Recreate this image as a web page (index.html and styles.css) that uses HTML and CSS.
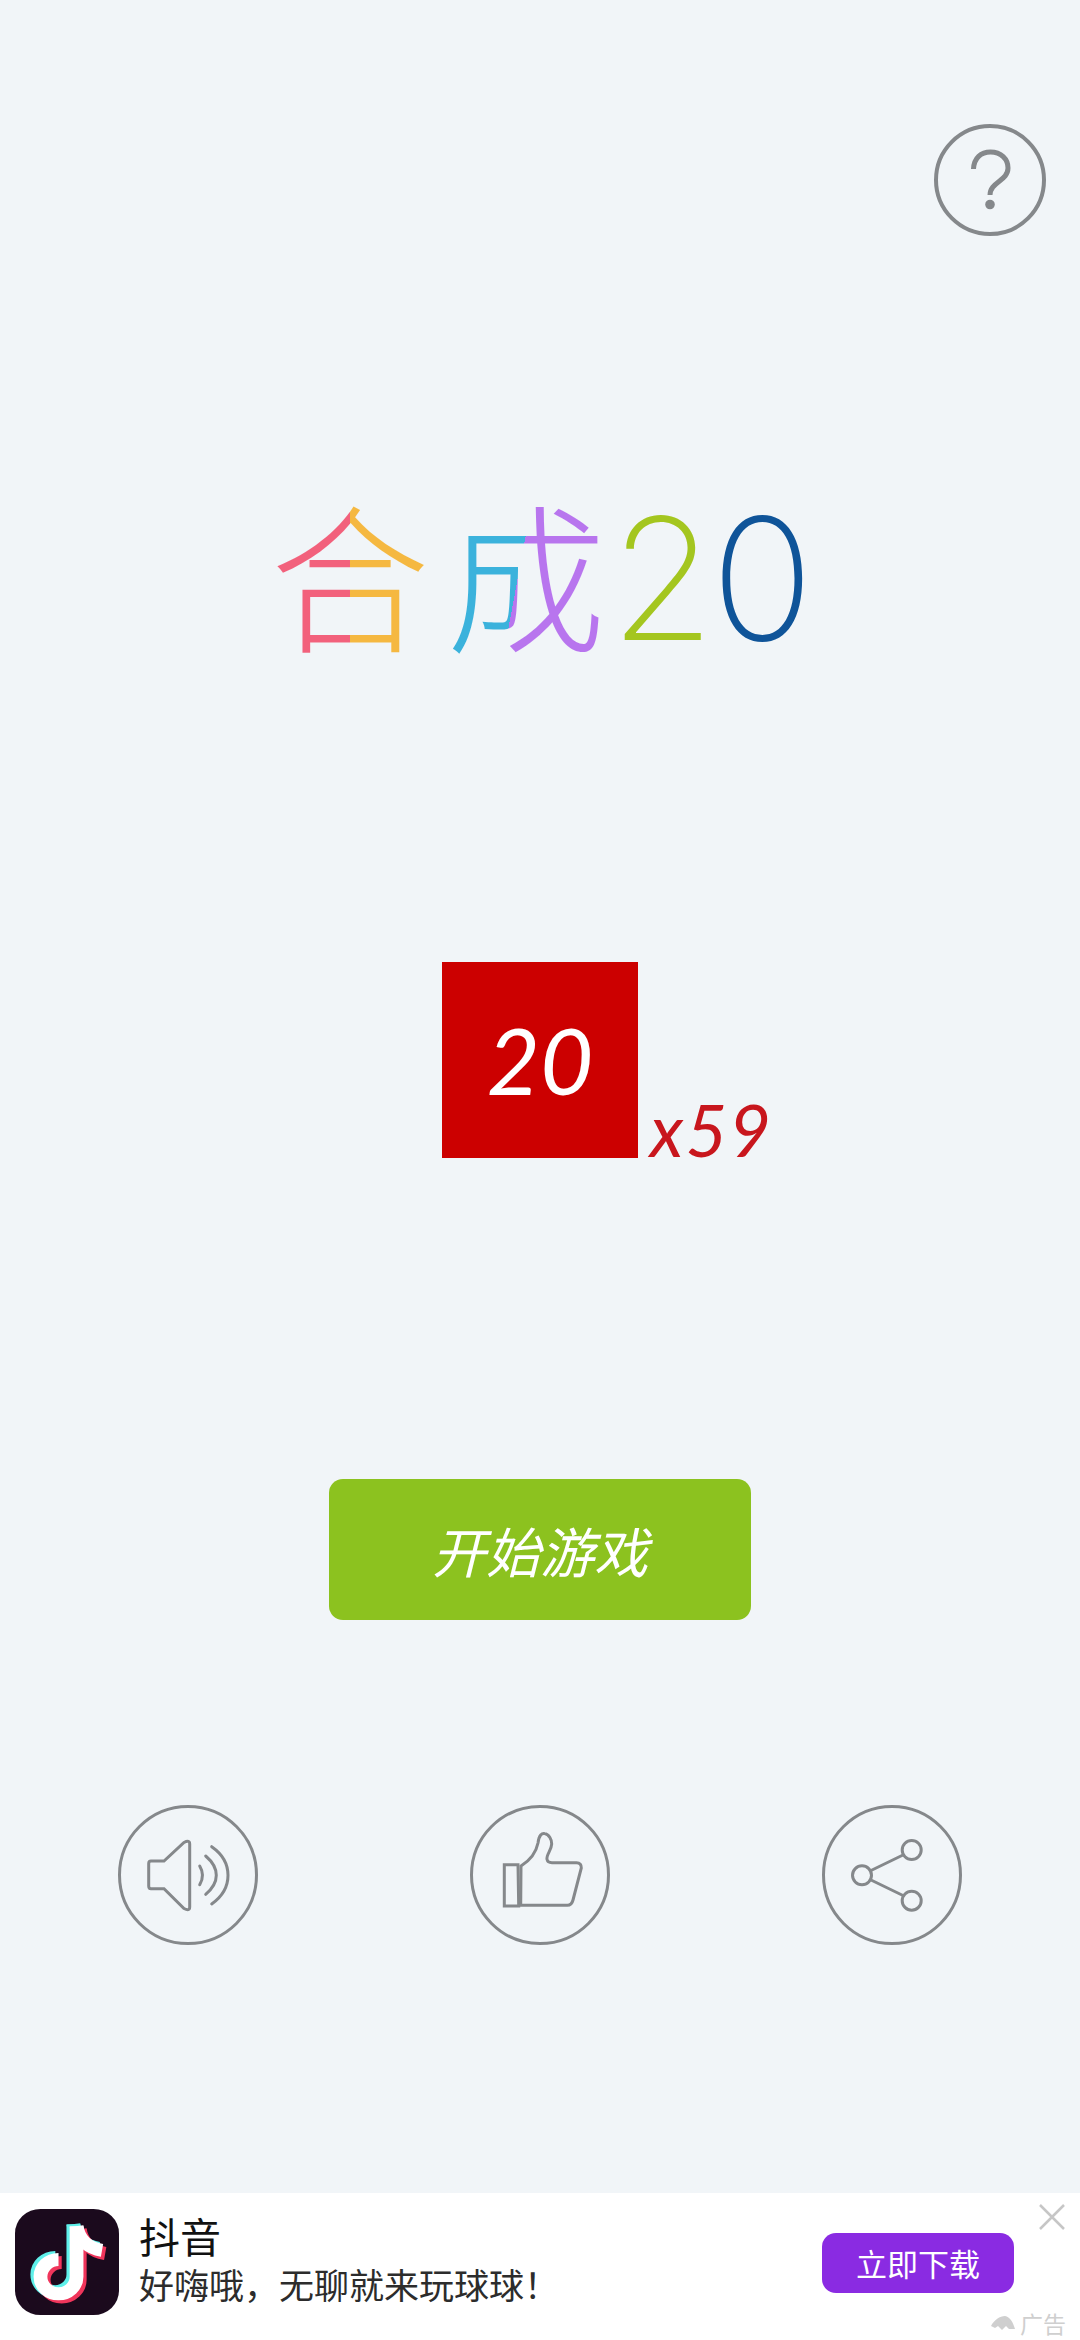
FILE: index.html
```html
<!DOCTYPE html>
<html lang="zh">
<head>
<meta charset="utf-8">
<title>合成20</title>
<link rel="stylesheet" href="styles.css">
</head>
<body>
<main class="page">
  <div class="top-bar">
    <button class="help">
      <svg class="help-svg" viewBox="0 0 112 112"><circle cx="56" cy="56" r="54" class="ln"/><path class="ln q" d="M39.5 45C40 34 47 28 56.5 28C67 28 74 35 74 44C74 57 56 58 56 71"/><circle cx="56" cy="80.5" r="4.8" class="dot"/></svg>
    </button>
  </div>
  <h1 class="title"><span class="ch he">合</span><span class="ch cheng">成</span><span class="num two">2</span><span class="num zero">0</span></h1>
  <div class="tile-row">
    <div class="tile">20<span class="count">x59</span></div>
  </div>
  <div class="start-row"><button class="start">开始游戏</button></div>
  <div class="actions">
    <svg class="act" viewBox="0 0 140 140"><circle cx="70" cy="70" r="68.5" class="ln thin"/><path class="ln thin" d="M33 56H46L66 37.500Q71.700 34.500 71.700 39V102Q71.700 106.500 66 103.500L46 83.700H33Q30.700 83.700 30.700 81V58.700Q30.700 56 33 56Z"/><path class="ln thin rd" d="M81.700 61Q87.300 70.300 81.700 79.700M87.700 51Q98.300 60 98.300 70.300Q98.300 80.500 87.700 89.300M93.700 41.700Q110 53 110 70.300Q110 87.500 93.700 99"/></svg>
    <svg class="act" viewBox="0 0 140 140"><circle cx="70" cy="70" r="68.500" class="ln thin"/><path class="ln thin" d="M34.300 59.700H48L48.700 101H34.300Z"/><path class="ln thin" d="M51 61C59 56 66 48 68 38C69 30 72 28 74.500 28.500C79 29 82 35 81.700 39C81.500 45 76 50 77 54.300C77.500 57 79 57.700 82 57.700H106.500C110 57.700 111.500 60 111.300 63L103 95C102 99 100.500 100.300 97.300 100.300H50.700Z"/></svg>
    <svg class="act" viewBox="0 0 140 140"><circle cx="70" cy="70" r="68.500" class="ln thin"/><circle cx="40" cy="70.300" r="9.500" class="ln thin"/><circle cx="89.700" cy="45" r="9.500" class="ln thin"/><circle cx="89.700" cy="95.700" r="9.500" class="ln thin"/><path class="ln thin" d="M49 65.500L81 50M49 75L81 90.500"/></svg>
  </div>
  <aside class="ad">
    <svg class="ad-icon" viewBox="0 0 98 105" preserveAspectRatio="none">
      <rect width="98" height="105" rx="24" fill="#1b0a1d"/>
      <g fill="none" stroke-width="13">
        <g stroke="#5ff0ea" transform="translate(-3 -2)"><path d="M58 17V67A17 17 0 1 1 41 50"/><path d="M58 17C60 31 70 39 82 41"/></g>
        <g stroke="#f0355b" transform="translate(3 3)"><path d="M58 17V67A17 17 0 1 1 41 50"/><path d="M58 17C60 31 70 39 82 41"/></g>
        <g stroke="#fff"><path d="M58 17V67A17 17 0 1 1 41 50"/><path d="M58 17C60 31 70 39 82 41"/></g>
      </g>
    </svg>
    <div class="ad-text">
      <div class="ad-name">抖音</div>
      <div class="ad-desc">好嗨哦，无聊就来玩球球！</div>
    </div>
    <button class="ad-btn">立即下载</button>
    <svg class="ad-close" viewBox="0 0 26 26"><path d="M1 1L25 25M25 1L1 25"/></svg>
    <div class="ad-tag">
      <svg class="ad-cloud" viewBox="0 0 24 14"><path d="M0 10C3 4 9 0 14 0C19 1 22 6 24 13H18L15 10L11 14L7 10L4 12Z"/></svg>广告
    </div>
  </aside>
</main>
</body>
</html>
```

FILE: styles.css
```css
* { box-sizing: border-box; }
html, body { margin: 0; padding: 0; }
body { background: #f1f5f8; }
button { border: 0; padding: 0; background: none; font: inherit; display: block; }

.page { width: 1080px; height: 2340px; display: flex; flex-direction: column; overflow: hidden; }

.top-bar { display: flex; justify-content: flex-end; padding: 124px 34px 0 0; }
.help, .help-svg { width: 112px; height: 112px; display: block; }

.ln { fill: none; stroke: #85888b; stroke-width: 4px; }
.thin { stroke-width: 3px; }
.rd { stroke-linecap: round; }
.q { stroke-width: 5px; }
.dot { fill: #85888b; }

.title {
  margin: 235px 0 0;
  padding-left: 270px;
  height: 200px;
  display: flex;
  align-items: center;
  font-weight: 300;
  line-height: 200px;
}
.ch {
  font-family: "Noto Sans CJK SC", sans-serif;
  font-size: 160px;
  font-weight: 300;
  color: transparent;
  -webkit-background-clip: text;
  background-clip: text;
  width: 160px;
}
.he { background-image: linear-gradient(90deg, #f2617c 0 50%, #f5b841 50%); margin-right: 16px; }
.cheng { background-image: linear-gradient(100.6deg, #3bb2dc 0 46.5%, #b875ee 46.5%); }
.num { font-family: "Inter", sans-serif; font-size: 170px; font-weight: 200; margin-top: 14px; }
.two { color: #a4c61f; margin-left: 4px; }
.zero { color: #0f5499; margin-left: -4px; }

.tile-row { margin-top: 291px; display: flex; justify-content: center; }
.tile {
  position: relative;
  width: 196px;
  height: 196px;
  background: #cc0000;
  color: #fff;
  font-family: "Lato", sans-serif;
  font-style: italic;
  font-weight: 400;
  font-size: 92px;
  line-height: 196px;
  text-align: center;
}
.count {
  position: absolute;
  left: 208px;
  bottom: -11px;
  color: #c8161d;
  font-size: 72px;
  font-weight: 400;
  letter-spacing: 2px;
  line-height: 80px;
  white-space: nowrap;
}

.start-row { margin-top: 321px; display: flex; justify-content: center; }
.start {
  width: 422px;
  height: 141px;
  border-radius: 14px;
  background: #8cc21f;
  color: #fff;
  font-family: "Noto Sans CJK SC", sans-serif;
  font-style: italic;
  font-weight: 400;
  font-size: 54px;
}

.actions { margin-top: 185px; padding-left: 118px; display: flex; gap: 212px; }
.act { width: 140px; height: 140px; display: block; }

.ad {
  position: relative;
  margin-top: auto;
  height: 147px;
  background: #fff;
  display: flex;
  align-items: flex-start;
  padding: 16px 66px 0 15px;
  font-family: "Noto Sans CJK SC", sans-serif;
}
.ad-icon { width: 104px; height: 106px; flex: none; }
.ad-text { margin-left: 20px; flex: 1; }
.ad-name { font-size: 41px; line-height: 52px; color: #111; }
.ad-desc { font-size: 35px; line-height: 46px; color: #2c2c2c; }
.ad-btn {
  flex: none;
  margin-top: 24px;
  width: 192px;
  height: 60px;
  border-radius: 14px;
  background: #8a2be2;
  color: #fff;
  font-size: 31px;
  line-height: 60px;
}
.ad-close { position: absolute; left: 1039px; top: 11px; width: 26px; height: 26px; }
.ad-close path { fill: none; stroke: #c6c6c6; stroke-width: 2.500; }
.ad-tag {
  position: absolute;
  right: 14px;
  bottom: 0;
  display: flex;
  align-items: center;
  gap: 5px;
  font-size: 23px;
  line-height: 34px;
  color: #cfcfcf;
}
.ad-cloud { width: 24px; height: 14px; fill: #cfcfcf; }
```
